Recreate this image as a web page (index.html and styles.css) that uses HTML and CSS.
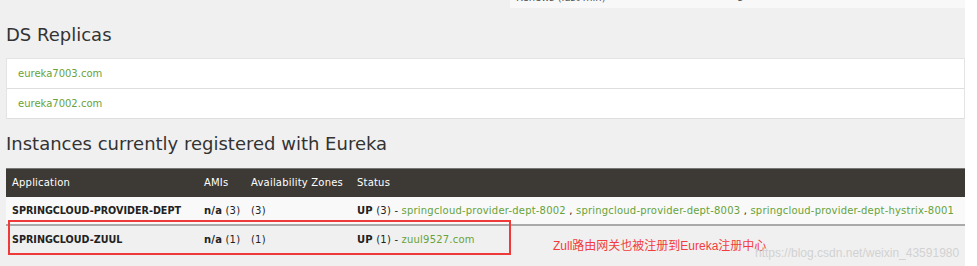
FILE: index.html
```html
<!DOCTYPE html>
<html>
<head>
    <meta charset="UTF-8">
    <title>Eureka</title>
    <link rel="stylesheet" href="styles.css">
</head>
<body>
    <div class="page">

        <!-- tail of the status table above -->
        <div class="top-strip">
            <span class="top-label">Renews (last min)</span>
            <span class="top-value">8</span>
        </div>

        <!-- DS Replicas -->
        <h2 class="replicas-title">DS Replicas</h2>
        <ul class="replicas">
            <li><a href="#">eureka7003.com</a></li>
            <li><a href="#">eureka7002.com</a></li>
        </ul>

        <!-- Instances -->
        <h2 class="instances-title">Instances currently registered with Eureka</h2>
        <table class="instances">
            <thead>
                <tr>
                    <th class="col-app">Application</th>
                    <th class="col-ami">AMIs</th>
                    <th class="col-az">Availability Zones</th>
                    <th>Status</th>
                </tr>
            </thead>
            <tbody>
                <tr class="row-odd">
                    <td class="app-name">SPRINGCLOUD-PROVIDER-DEPT</td>
                    <td><b>n/a</b> (3)</td>
                    <td>(3)</td>
                    <td><b>UP</b> (3) - <a href="#">springcloud-provider-dept-8002</a> , <a href="#">springcloud-provider-dept-8003</a> , <a href="#">springcloud-provider-dept-hystrix-8001</a></td>
                </tr>
                <tr>
                    <td class="app-name">SPRINGCLOUD-ZUUL</td>
                    <td><b>n/a</b> (1)</td>
                    <td>(1)</td>
                    <td><b>UP</b> (1) - <a href="#">zuul9527.com</a></td>
                </tr>
            </tbody>
        </table>

        <!-- screenshot annotations -->
        <div class="mark-box"></div>
        <div class="mark-note">Zull路由网关也被注册到Eureka注册中心</div>
        <div class="watermark">https://blog.csdn.net/weixin_43591980</div>
    </div>
</body>
</html>
```

FILE: styles.css
```css
/* General Styling */
body {
    margin: 0;
    background: #ffffff;
}

.page {
    position: relative;
    width: 959px;
    height: 266px;
    padding-left: 6px;
    background: #f0f0f0;
    font-family: "DejaVu Sans", sans-serif;
    color: #222;
    overflow: hidden;
}

a {
    color: #67a33a;
    text-decoration: none;
}

.top-strip {
    display: flex;
    margin-left: 504px;
    height: 8px;
    background: #f8f8f8;
    overflow: hidden;
    font-size: 10px;
    color: #555;
}

.top-strip span {
    margin-top: -8px;
    line-height: 12px;
}

.top-label {
    padding-left: 6px;
    width: 221px;
}

h2 {
    font-size: 18px;
    line-height: 24px;
    font-weight: normal;
    color: #333;
}

.replicas-title {
    margin: 15px 0 11px;
}

.instances-title {
    margin: 13px 0 12px;
}

.replicas {
    list-style: none;
    margin: 0;
    padding: 0;
    background: #ffffff;
    border: 1px solid #e4e4e4;
    border-bottom: none;
}

.replicas li {
    height: 29px;
    line-height: 29px;
    padding-left: 11px;
    font-size: 10px;
    border-bottom: 1px solid #dedede;
}

.instances {
    width: 959px;
    border-collapse: collapse;
    table-layout: fixed;
    font-size: 10px;
    letter-spacing: 0.2px;
}

.instances th {
    box-sizing: border-box;
    height: 28px;
    padding: 0 6px;
    background: #3d3a35;
    border-top: 1px solid #777;
    color: #ffffff;
    font-weight: normal;
    text-align: left;
}

.col-app {
    width: 192px;
}

.col-ami {
    width: 47px;
}

.col-az {
    width: 106px;
}

.instances td {
    height: 27px;
    padding: 0 6px;
    white-space: nowrap;
}

.row-odd {
    background: #f9f9f9;
    border-bottom: 2px solid #aaaaaa;
}

.app-name {
    font-weight: bold;
    font-size: 9.6px;
    letter-spacing: 0;
}

/* annotations */
.mark-box {
    position: absolute;
    left: 8px;
    top: 220px;
    width: 503px;
    height: 35px;
    box-sizing: border-box;
    border: 2px solid #ef3a3a;
}

.mark-note {
    position: absolute;
    left: 553px;
    top: 239px;
    font-family: "Liberation Sans", "Noto Sans CJK SC", sans-serif;
    font-size: 12px;
    line-height: 14px;
    color: #f23c3c;
}

.watermark {
    position: absolute;
    left: 755px;
    top: 245px;
    font-family: "Liberation Sans", sans-serif;
    font-size: 12px;
    line-height: 16px;
    color: #d2d2d2;
}
```
